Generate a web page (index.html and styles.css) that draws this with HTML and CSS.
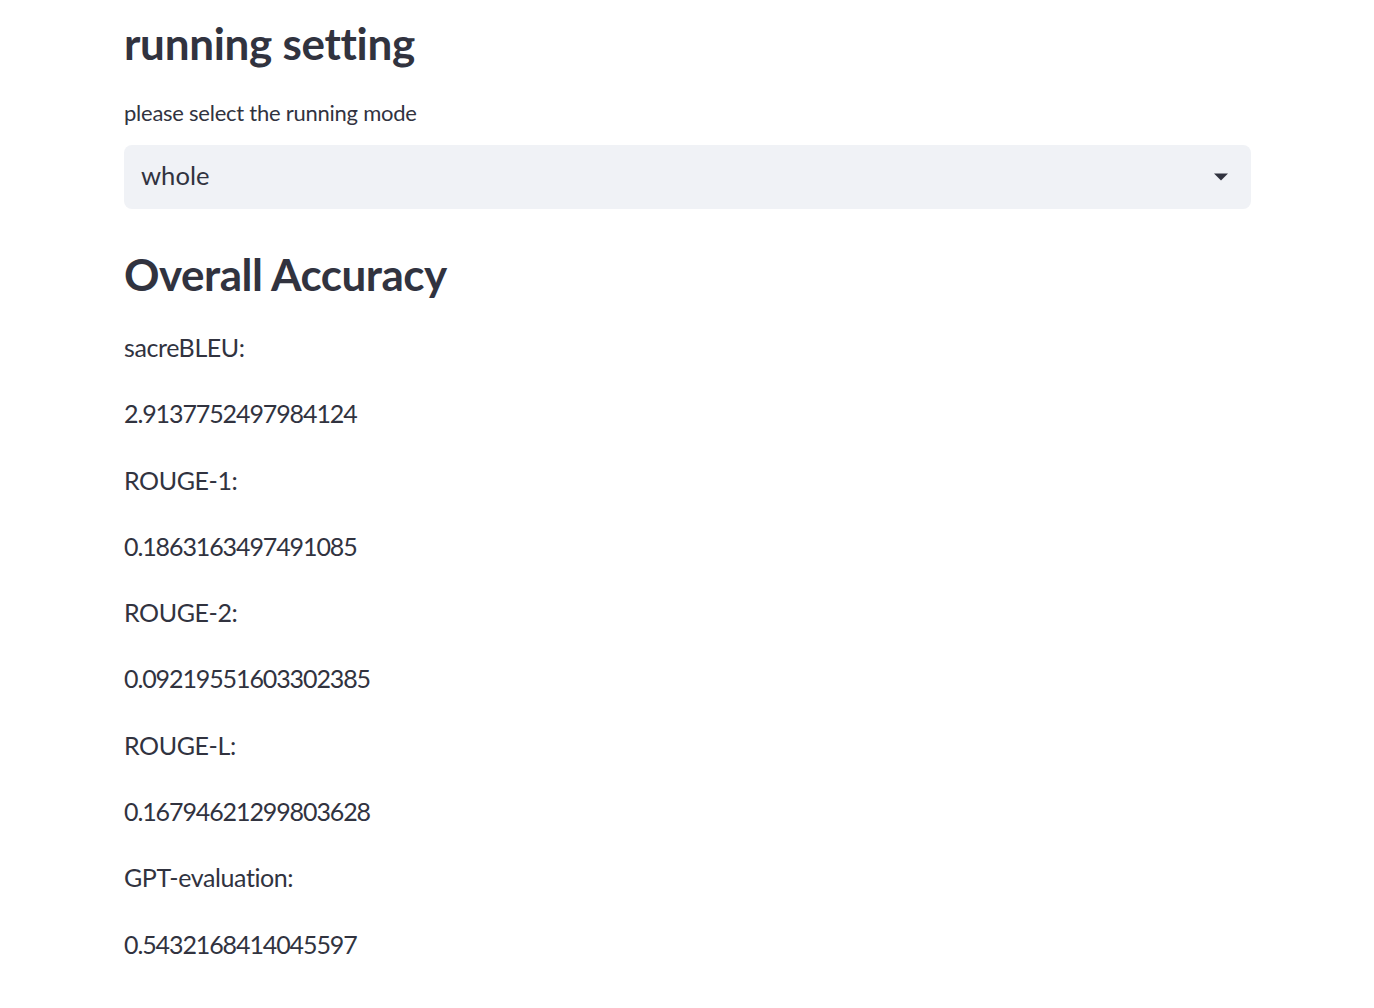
FILE: index.html
```html
<!DOCTYPE html>
<html lang="en">
<head>
<meta charset="utf-8">
<title>running setting</title>
<link rel="stylesheet" href="styles.css">
</head>
<body>
<main class="page">
  <h3 class="heading heading-top">running setting</h3>
  <label class="field-label">please select the running mode</label>
  <div class="select">
    <span class="select-value">whole</span>
    <svg class="select-arrow" width="16" height="10" viewBox="0 0 16 10"><path d="M1 1.5h14L8 8.5z" fill="#31333F"/></svg>
  </div>
  <h3 class="heading heading-acc">Overall Accuracy</h3>
  <div class="metrics">
    <p class="metric">sacreBLEU:</p>
    <p class="metric num">2.9137752497984124</p>
    <p class="metric">ROUGE-1:</p>
    <p class="metric num">0.1863163497491085</p>
    <p class="metric">ROUGE-2:</p>
    <p class="metric num">0.09219551603302385</p>
    <p class="metric">ROUGE-L:</p>
    <p class="metric num">0.16794621299803628</p>
    <p class="metric">GPT-evaluation:</p>
    <p class="metric num">0.5432168414045597</p>
  </div>
</main>
</body>
</html>
```
FILE: styles.css
```css
html, body {
  margin: 0;
  padding: 0;
  background: #ffffff;
}
body {
  font-family: "Lato", "Noto Sans", sans-serif;
  color: #31333F;
}
.page {
  width: 1127px;
  margin-left: 124px;
  display: flex;
  flex-direction: column;
}
.heading {
  margin: 0;
  font-size: 44px;
  font-weight: 700;
  line-height: 54px;
  letter-spacing: -0.5px;
}
.heading-top {
  margin-top: 16px;
  letter-spacing: -0.3px;
}
.field-label {
  margin-top: 25px;
  font-size: 22px;
  line-height: 36px;
  letter-spacing: -0.25px;
}
.select {
  margin-top: 14px;
  height: 64px;
  background: #F0F2F6;
  border-radius: 8px;
  display: flex;
  align-items: center;
  justify-content: space-between;
  padding: 0 22px 0 17px;
}
.select-value {
  font-size: 25.6px;
  line-height: 1;
  margin-top: -2px;
}
.select-arrow {
  display: block;
}
.heading-acc {
  margin-top: 38px;
}
.metrics {
  margin-top: 26px;
  display: flex;
  flex-direction: column;
  gap: 25.3px;
}
.metric {
  margin: 0;
  font-size: 25px;
  line-height: 41px;
  letter-spacing: -0.4px;
}
.metric.num {
  letter-spacing: -1.1px;
}
```
